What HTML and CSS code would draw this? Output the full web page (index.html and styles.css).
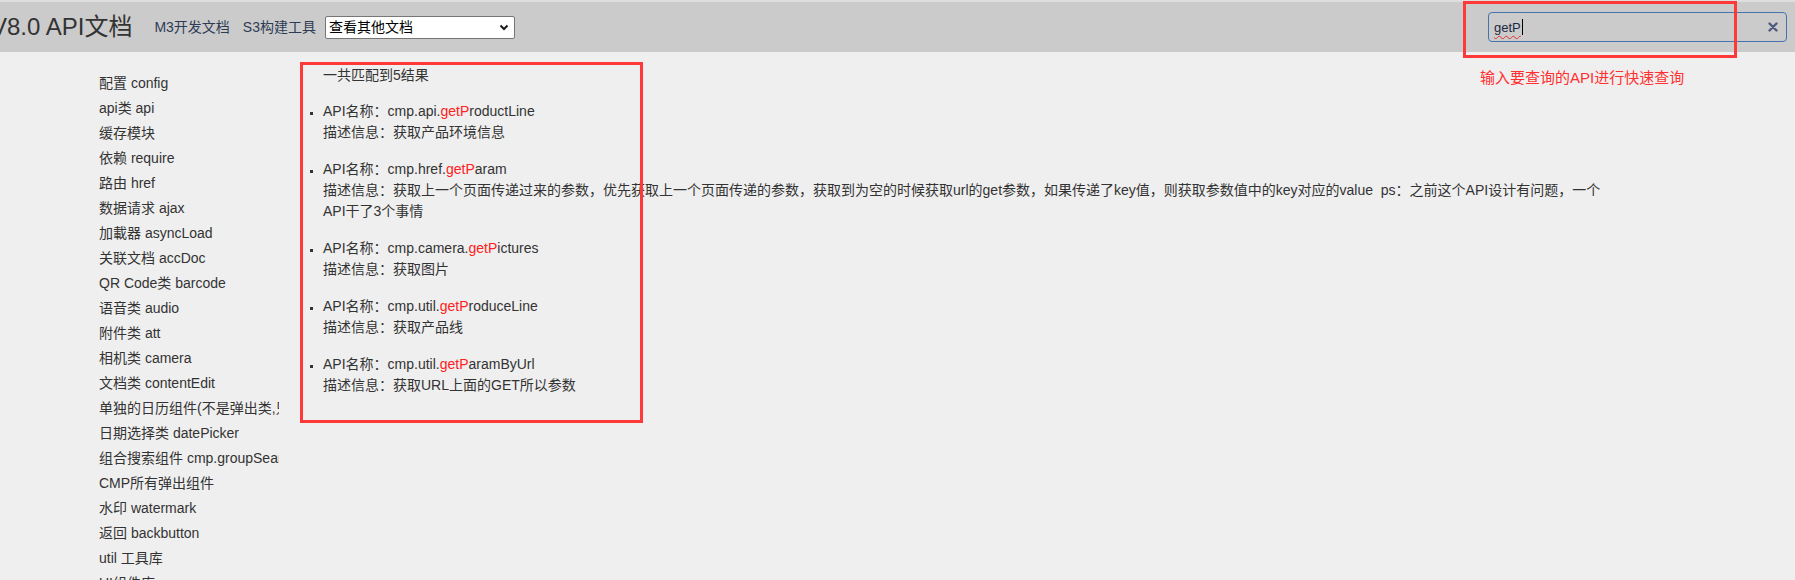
FILE: index.html
```html
<!DOCTYPE html>
<html>
<head>
  <meta charset="UTF-8">
  <title>API文档</title>
  <link rel="stylesheet" href="styles.css">
</head>
<body>
  <div class="header">
    <h1 class="title">V8.0 API文档</h1>
    <div class="links">
      <a href="#">M3开发文档</a>
      <a href="#">S3构建工具</a>
    </div>
    <div class="select-wrap">
      <select class="doc-select">
        <option>查看其他文档</option>
      </select>
      <svg class="chevron" width="10" height="7" viewBox="0 0 10 7"><path d="M1.5 1.5l3.5 3.5 3.5-3.5" fill="none" stroke="#1a1a1a" stroke-width="2"/></svg>
    </div>
    <div class="search">
      <span class="search-text">getP</span><span class="caret"></span>
      <svg class="clear" width="10" height="10" viewBox="0 0 10 10"><path d="M1.5 1.5l7 7M8.5 1.5l-7 7" stroke="#4d5b7c" stroke-width="2.4" stroke-linecap="round"/></svg>
    </div>
  </div>

  <div class="main">
    <ul class="menu">
      <li>配置 config</li>
      <li>api类 api</li>
      <li>缓存模块</li>
      <li>依赖 require</li>
      <li>路由 href</li>
      <li>数据请求 ajax</li>
      <li>加載器 asyncLoad</li>
      <li>关联文档 accDoc</li>
      <li>QR Code类 barcode</li>
      <li>语音类 audio</li>
      <li>附件类 att</li>
      <li>相机类 camera</li>
      <li>文档类 contentEdit</li>
      <li>单独的日历组件(不是弹出类,只能内嵌) calendar</li>
      <li>日期选择类 datePicker</li>
      <li>组合搜索组件 cmp.groupSearch</li>
      <li>CMP所有弹出组件</li>
      <li>水印 watermark</li>
      <li>返回 backbutton</li>
      <li>util 工具库</li>
      <li>UI组件库</li>
    </ul>

    <div class="results">
      <p class="summary">一共匹配到5结果</p>
      <ul class="result-list">
        <li>
          <div>API名称：cmp.api.<span class="hit">getP</span>roductLine</div>
          <div>描述信息：获取产品环境信息</div>
        </li>
        <li>
          <div>API名称：cmp.href.<span class="hit">getP</span>aram</div>
          <div>描述信息：获取上一个页面传递过来的参数，优先获取上一个页面传递的参数，获取到为空的时候获取url的get参数，如果传递了key值，则获取参数值中的key对应的value&nbsp; ps：之前这个API设计有问题，一个API干了3个事情</div>
        </li>
        <li>
          <div>API名称：cmp.camera.<span class="hit">getP</span>ictures</div>
          <div>描述信息：获取图片</div>
        </li>
        <li>
          <div>API名称：cmp.util.<span class="hit">getP</span>roduceLine</div>
          <div>描述信息：获取产品线</div>
        </li>
        <li>
          <div>API名称：cmp.util.<span class="hit">getP</span>aramByUrl</div>
          <div>描述信息：获取URL上面的GET所以参数</div>
        </li>
      </ul>
    </div>
  </div>

  <div class="mark mark-search"></div>
  <div class="mark mark-results"></div>
  <p class="mark-note">输入要查询的API进行快速查询</p>
</body>
</html>
```

FILE: styles.css
```css
html, body {
  margin: 0;
  height: 100%;
  overflow: hidden;
}
body {
  position: relative;
  background: #efefef;
  color: #333;
  font-family: "Liberation Sans", "Noto Sans CJK SC", sans-serif;
  font-size: 14px;
}
.header {
  display: flex;
  align-items: center;
  height: 50px;
  border-top: 2px solid #dedede;
  background: #cbcbcb;
}
.title {
  margin: 0 0 0 -9px;
  font-size: 24px;
  font-weight: normal;
  line-height: 30px;
  color: #333;
}
.links {
  display: flex;
  gap: 13px;
  margin-left: 22px;
}
.links a {
  color: #2f3b55;
  text-decoration: none;
  line-height: 20px;
}
.select-wrap {
  position: relative;
  margin-left: 9px;
}
.doc-select {
  display: block;
  width: 190px;
  height: 23px;
  padding: 0 20px 0 3px;
  border: 1px solid #767676;
  border-radius: 2px;
  background: #fff;
  color: #000;
  font-family: inherit;
  font-size: 14px;
  appearance: none;
  -webkit-appearance: none;
}
.chevron {
  position: absolute;
  right: 6px;
  top: 8px;
}
.search {
  display: flex;
  align-items: center;
  box-sizing: border-box;
  width: 299px;
  height: 30px;
  margin: 0 8px 0 auto;
  padding: 0 8px 0 5px;
  border: 1px solid #4673b0;
  border-radius: 4px;
  font-size: 13px;
  color: #1e2a44;
}
.search-text {
  text-decoration: underline wavy #e23030;
  text-decoration-thickness: 1px;
  text-underline-offset: 3px;
}
.caret {
  width: 1px;
  height: 16px;
  margin-left: 1px;
  background: #000;
}
.clear {
  margin-left: auto;
}
.main {
  display: flex;
  padding-left: 99px;
}
.menu {
  width: 180px;
  margin: 0;
  padding: 19px 0 0;
  list-style: none;
  overflow: hidden;
  white-space: nowrap;
}
.menu li {
  line-height: 25px;
}
.results {
  width: 1288px;
  margin-left: 44px;
  padding-top: 13px;
}
.summary {
  margin: 0;
  line-height: 21px;
}
.result-list {
  margin: 15px 0 0;
  padding: 0;
  list-style: square;
}
.result-list li {
  line-height: 21px;
  margin-bottom: 16px;
}
.result-list li::marker {
  font-size: 11px;
}
.hit {
  color: #ff2020;
}
.mark {
  position: absolute;
  border: 3px solid #ff3838;
}
.mark-search {
  left: 1463px;
  top: 1px;
  width: 268px;
  height: 51px;
}
.mark-results {
  left: 300px;
  top: 62px;
  width: 337px;
  height: 355px;
}
.mark-note {
  position: absolute;
  left: 1480px;
  top: 68px;
  margin: 0;
  font-size: 15px;
  line-height: 20px;
  color: #ff3030;
}
```
